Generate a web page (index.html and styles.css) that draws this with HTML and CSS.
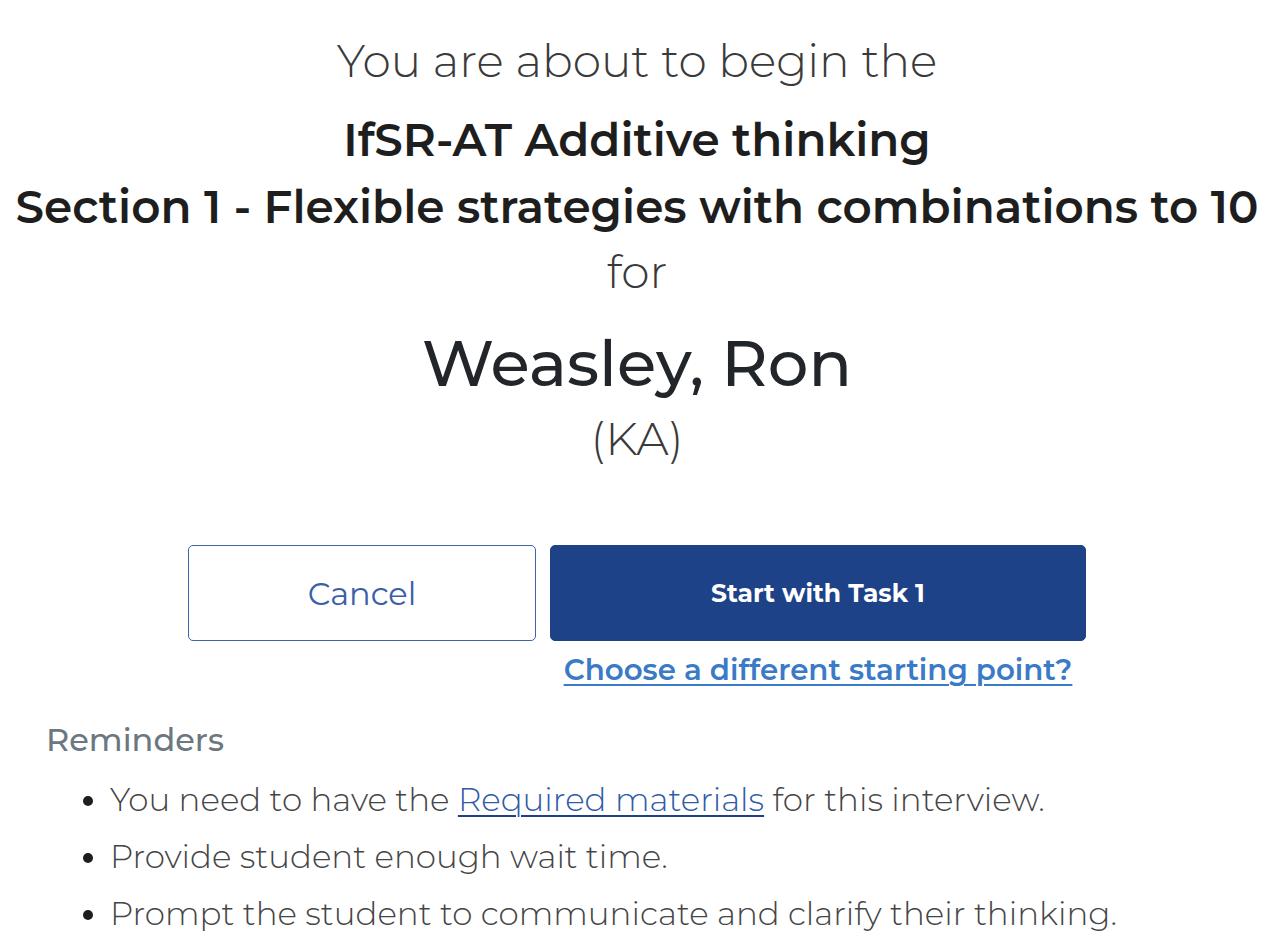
FILE: index.html
```html
<!DOCTYPE html>
<html lang="en">
<head>
<meta charset="utf-8">
<title>Begin interview</title>
<link rel="stylesheet" href="styles.css">
</head>
<body>
<main class="page">
  <header class="intro">
    <p class="lead">You are about to begin the</p>
    <h1 class="title">IfSR-AT Additive thinking<br>Section 1 - Flexible strategies with combinations to 10</h1>
    <p class="lead lead-for">for</p>
    <h2 class="student">Weasley, Ron</h2>
    <p class="code">(KA)</p>
  </header>

  <div class="actions">
    <button class="btn btn-outline" type="button">Cancel</button>
    <div class="start-col">
      <button class="btn btn-primary" type="button">Start with Task 1</button>
      <a class="alt-link" href="#">Choose a different starting point?</a>
    </div>
  </div>

  <section class="reminders">
    <h3 class="reminders-title">Reminders</h3>
    <ul class="reminders-list">
      <li>You need to have the <a class="inline-link" href="#">Required materials</a> for this interview.</li>
      <li>Provide student enough wait time.</li>
      <li>Prompt the student to communicate and clarify their thinking.</li>
    </ul>
  </section>
</main>
</body>
</html>
```
FILE: styles.css
```css
* { box-sizing: border-box; }

html, body {
  margin: 0;
  padding: 0;
  background: #ffffff;
}

body {
  font-family: "Montserrat", "Inter", "Open Sans", sans-serif;
  color: #212529;
}

.page {
  padding: 31px 0 0 7px;
}

.intro {
  text-align: center;
}

.lead {
  margin: 0;
  font-size: 45.5px;
  line-height: 60px;
  font-weight: 300;
  color: #3a3a3a;
}

.title {
  margin: 15px 0 0;
  font-size: 45.3px;
  line-height: 67px;
  font-weight: 600;
  color: #1e1e1e;
  white-space: nowrap;
}

.lead-for {
  margin-top: 2px;
}

.student {
  margin: 21px 0 0;
  font-size: 64px;
  line-height: 80px;
  font-weight: 500;
  color: #22262a;
}

.code {
  margin: 12px 0 0;
  font-size: 46px;
  line-height: 48px;
  font-weight: 300;
  color: #3a3a3a;
}

.actions {
  display: flex;
  justify-content: center;
  align-items: flex-start;
  gap: 14px;
  margin-top: 82px;
}

.btn {
  font-family: inherit;
  height: 96px;
  border-radius: 5px;
  cursor: pointer;
  padding: 0;
}

.btn-outline {
  width: 348px;
  background: #ffffff;
  border: 1.5px solid #3c64a8;
  color: #3a5fa8;
  font-size: 32px;
  font-weight: 400;
}

.start-col {
  width: 536px;
  display: flex;
  flex-direction: column;
  align-items: center;
}

.btn-primary {
  width: 100%;
  background: #1e4287;
  border: 1px solid #1e4287;
  color: #ffffff;
  font-size: 25px;
  font-weight: 700;
}

.alt-link {
  margin-top: 11px;
  font-size: 29.3px;
  line-height: 36px;
  font-weight: 600;
  color: #3b7ac6;
  text-decoration: underline;
  text-underline-offset: 4px;
  text-decoration-thickness: 2px;
}

.reminders {
  margin: 32px 0 0 39px;
}

.reminders-title {
  margin: 0;
  font-size: 32px;
  line-height: 40px;
  font-weight: 500;
  color: #6c7780;
}

.reminders-list {
  margin: 11px 0 0;
  padding-left: 64px;
  font-size: 32.5px;
  line-height: 57px;
  font-weight: 300;
  color: #454545;
}

.reminders-list li::marker {
  color: #1e1e1e;
}

.inline-link {
  color: #2f5ba8;
  text-decoration: underline;
  text-decoration-color: #1e3f8a;
  text-decoration-thickness: 2px;
  text-underline-offset: 4px;
}
```
